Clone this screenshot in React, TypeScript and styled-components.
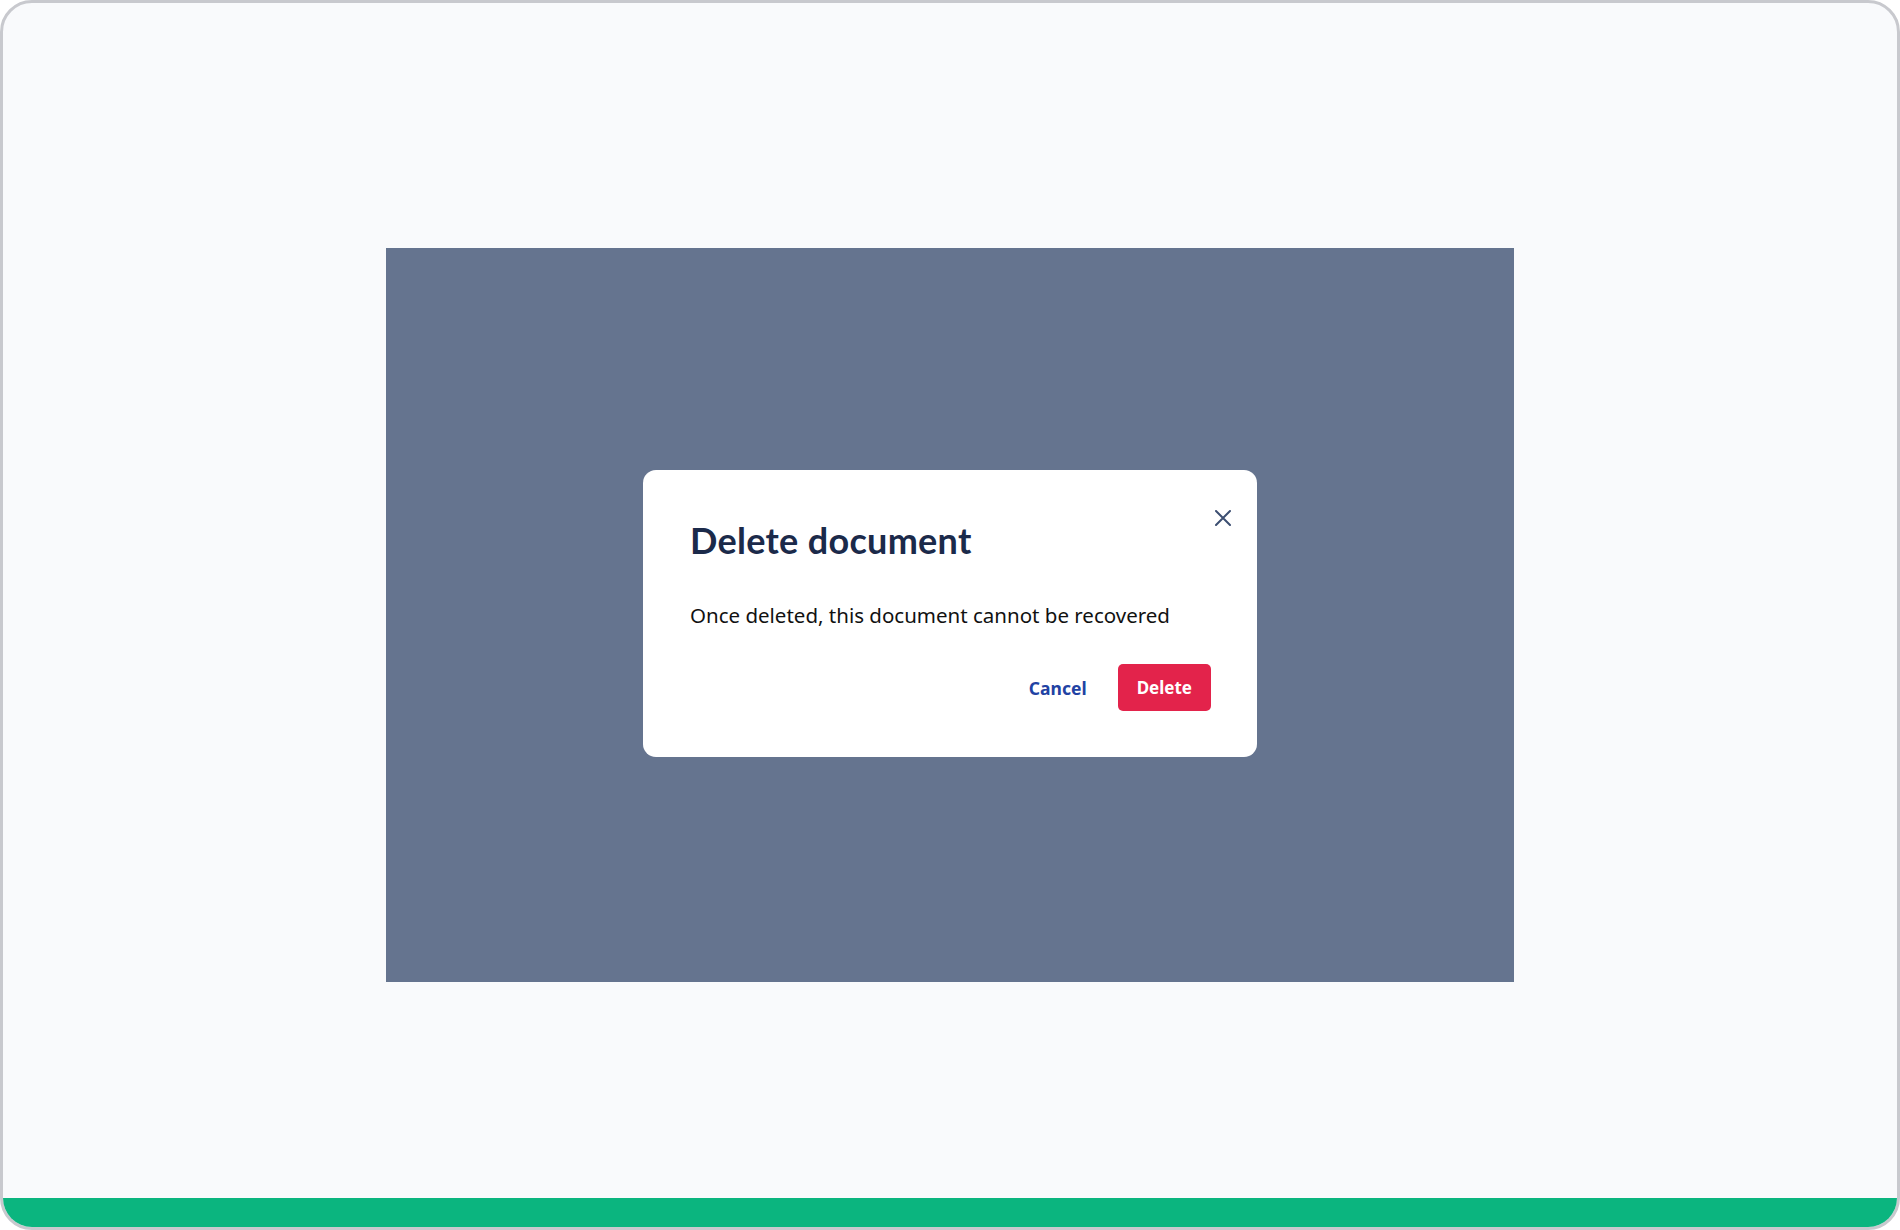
import React from "react";
import styled, { createGlobalStyle } from "styled-components";

const GlobalStyle = createGlobalStyle`
  html, body {
    margin: 0;
    padding: 0;
    background: #ffffff;
  }
  * { box-sizing: border-box; }
`;

const Frame = styled.div`
  width: 1900px;
  height: 1230px;
  border: 3px solid #c8c9ce;
  border-radius: 32px;
  background: #f9fafc;
  overflow: hidden;
  display: flex;
  flex-direction: column;
`;

const Stage = styled.main`
  flex: 1;
  display: flex;
  justify-content: center;
  align-items: flex-start;
  padding-top: 245px;
`;

const Overlay = styled.div`
  width: 1128px;
  height: 734px;
  background: #65748f;
  display: flex;
  align-items: center;
  justify-content: center;
  padding-bottom: 3px;
`;

const Dialog = styled.div`
  position: relative;
  width: 614px;
  height: 287px;
  background: #ffffff;
  border-radius: 13px;
  padding: 46px 46px 46px 47px;
  display: flex;
  flex-direction: column;
`;

const Title = styled.h2`
  margin: 4px 0 0;
  font-family: Lato, "Noto Sans", sans-serif;
  font-weight: 700;
  font-size: 36px;
  line-height: 40px;
  color: #1b2a4a;
  letter-spacing: 0.3px;
`;

const Message = styled.p`
  margin: 41px 0 0;
  font-family: "Noto Sans", "Open Sans", sans-serif;
  font-size: 20.5px;
  line-height: 28px;
  color: #111111;
`;

const Actions = styled.div`
  margin-top: auto;
  display: flex;
  justify-content: flex-end;
  align-items: center;
  gap: 28px;
`;

const TextButton = styled.button`
  border: none;
  background: transparent;
  padding: 0 3px;
  font-family: "Noto Sans", "Open Sans", sans-serif;
  font-weight: 700;
  font-size: 17.5px;
  color: #2142a3;
  cursor: pointer;
`;

const DangerButton = styled.button`
  border: none;
  background: #e3234b;
  color: #ffffff;
  border-radius: 5px;
  height: 47px;
  padding: 0 19px;
  font-family: "Noto Sans", "Open Sans", sans-serif;
  font-weight: 700;
  font-size: 17px;
  cursor: pointer;
`;

const CloseButton = styled.button`
  position: absolute;
  top: 35px;
  right: 22px;
  width: 25px;
  height: 25px;
  border: none;
  background: transparent;
  padding: 0;
  display: flex;
  align-items: center;
  justify-content: center;
  cursor: pointer;
`;

const GreenBar = styled.div`
  height: 29px;
  background: #0bb57f;
  flex-shrink: 0;
`;

export default function App() {
  return (
    <>
      <GlobalStyle />
      <Frame>
        <Stage>
          <Overlay>
            <Dialog role="dialog" aria-labelledby="dlg-title">
              <CloseButton aria-label="Close">
                <svg width="16" height="16" viewBox="0 0 16 16" fill="none">
                  <path
                    d="M1 1L15 15M15 1L1 15"
                    stroke="#3d4f72"
                    strokeWidth="2"
                    strokeLinecap="round"
                  />
                </svg>
              </CloseButton>
              <Title id="dlg-title">Delete document</Title>
              <Message>Once deleted, this document cannot be recovered</Message>
              <Actions>
                <TextButton>Cancel</TextButton>
                <DangerButton>Delete</DangerButton>
              </Actions>
            </Dialog>
          </Overlay>
        </Stage>
        <GreenBar />
      </Frame>
    </>
  );
}
